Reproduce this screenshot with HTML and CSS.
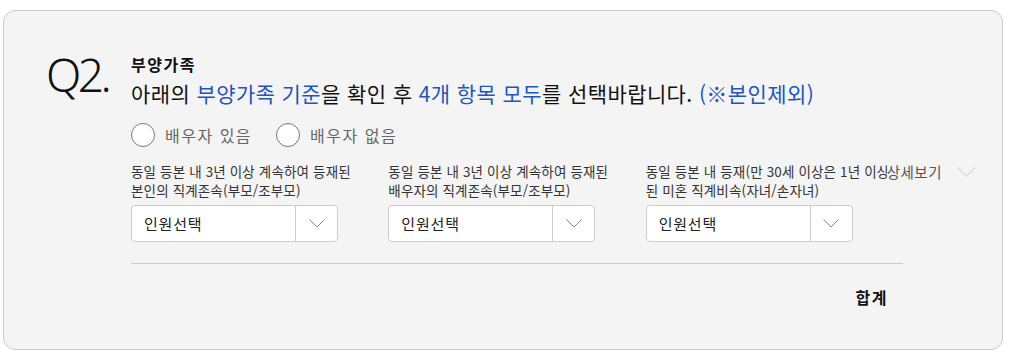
FILE: index.html
```html
<!DOCTYPE html>
<html lang="ko">
<head>
    <meta charset="UTF-8">
    <meta name="viewport" content="width=device-width, initial-scale=1.0">
    <title>부양가족</title>
    <link rel="stylesheet" href="styles.css">
</head>
<body>
    <div class="question-box">
        <div class="q-num">Q2.</div>
        <div class="q-body">
            <h2 class="q-title">부양가족</h2>
            <p class="q-text">아래의 <span class="blue">부양가족 기준</span>을 확인 후 <span class="blue">4개 항목 모두</span>를 선택바랍니다. <span class="blue">(※본인제외)</span></p>

            <div class="radio-row">
                <label class="radio"><span class="circle"></span>배우자 있음</label>
                <label class="radio"><span class="circle"></span>배우자 없음</label>
            </div>

            <div class="select-row">
                <div class="select-col">
                    <p class="select-label">동일 등본 내 3년 이상 계속하여 등재된<br>본인의 직계존속(부모/조부모)</p>
                    <div class="select-box">
                        <span class="select-value">인원선택</span>
                        <span class="select-arrow">
                            <svg width="16" height="9" viewBox="0 0 16 9"><path d="M0.5 0.5 L8 8 L15.5 0.5" fill="none" stroke="#888" stroke-width="1"/></svg>
                        </span>
                    </div>
                </div>
                <div class="select-col">
                    <p class="select-label">동일 등본 내 3년 이상 계속하여 등재된<br>배우자의 직계존속(부모/조부모)</p>
                    <div class="select-box">
                        <span class="select-value">인원선택</span>
                        <span class="select-arrow">
                            <svg width="16" height="9" viewBox="0 0 16 9"><path d="M0.5 0.5 L8 8 L15.5 0.5" fill="none" stroke="#888" stroke-width="1"/></svg>
                        </span>
                    </div>
                </div>
                <div class="select-col">
                    <p class="select-label">동일 등본 내 등재(만 30세 이상은 1년 이상<br>된 미혼 직계비속(자녀/손자녀)</p>
                    <button class="detail-btn">상세보기
                        <svg width="19" height="10" viewBox="0 0 19 10"><path d="M0.5 0.5 L9.5 9 L18.5 0.5" fill="none" stroke="#c8c8c8" stroke-width="1"/></svg>
                    </button>
                    <div class="select-box">
                        <span class="select-value">인원선택</span>
                        <span class="select-arrow">
                            <svg width="16" height="9" viewBox="0 0 16 9"><path d="M0.5 0.5 L8 8 L15.5 0.5" fill="none" stroke="#888" stroke-width="1"/></svg>
                        </span>
                    </div>
                </div>
            </div>

            <div class="divider"></div>
            <div class="total">합계</div>
        </div>
    </div>
</body>
</html>
```

FILE: styles.css
```css
* {
    box-sizing: border-box;
    margin: 0;
    padding: 0;
    font-family: "Noto Sans CJK KR", "Noto Sans", sans-serif;
}

body {
    background: #fff;
    color: #222;
}

.question-box {
    display: flex;
    width: 1000px;
    height: 340px;
    margin: 10px 0 0 3px;
    padding: 43px 0 0 43px;
    background: #f4f4f4;
    border: 1px solid #ccc;
    border-radius: 12px;
}

.q-num {
    width: 84px;
    flex-shrink: 0;
    margin-left: -1px;
    margin-right: 1px;
    font-family: "Noto Sans", sans-serif;
    font-weight: 300;
    font-size: 46px;
    line-height: 46px;
    letter-spacing: -3.5px;
    color: #111;
    margin-top: -3px;
}

.q-body {
    width: 772px;
}

.q-title {
    font-size: 16px;
    font-weight: 700;
    line-height: 20px;
    letter-spacing: 1.5px;
    color: #111;
}

.q-text {
    margin-top: 5px;
    font-size: 21px;
    line-height: 28px;
    letter-spacing: 0.4px;
    color: #111;
}

.blue {
    color: #2455b8;
}

.radio-row {
    display: flex;
    gap: 24px;
    margin-top: 16px;
}

.radio {
    display: flex;
    align-items: center;
    gap: 10px;
    font-size: 16px;
    line-height: 24px;
    letter-spacing: 1.5px;
    color: #666;
}

.circle {
    width: 24px;
    height: 24px;
    border: 1px solid #777;
    border-radius: 50%;
    background: #fff;
}

.select-row {
    display: flex;
    margin-top: 15px;
}

.select-col {
    position: relative;
    width: 258px;
}

.select-label {
    font-size: 13.5px;
    line-height: 19px;
    color: #333;
    white-space: nowrap;
    letter-spacing: 0.15px;
}

.detail-btn {
    position: absolute;
    left: 241px;
    top: 0;
    display: flex;
    align-items: center;
    gap: 15px;
    padding: 0;
    border: none;
    background: #f4f4f4;
    font-size: 14.5px;
    line-height: 19px;
    letter-spacing: 0.5px;
    color: #555;
    white-space: nowrap;
    cursor: pointer;
}

.select-box {
    display: flex;
    width: 207px;
    height: 37px;
    margin-top: 5px;
    background: #fff;
    border: 1px solid #ccc;
    border-radius: 4px;
}

.select-value {
    flex: 1;
    padding-left: 12px;
    font-size: 15px;
    line-height: 35px;
    letter-spacing: 0.8px;
    color: #222;
}

.select-arrow {
    display: flex;
    align-items: center;
    justify-content: center;
    width: 42px;
    border-left: 1px solid #ccc;
}

.divider {
    margin-top: 21px;
    height: 1px;
    background: #ccc;
}

.total {
    margin-top: 23px;
    padding-right: 15px;
    text-align: right;
    font-size: 16px;
    font-weight: 700;
    line-height: 20px;
    letter-spacing: 1.5px;
    color: #111;
}
```
